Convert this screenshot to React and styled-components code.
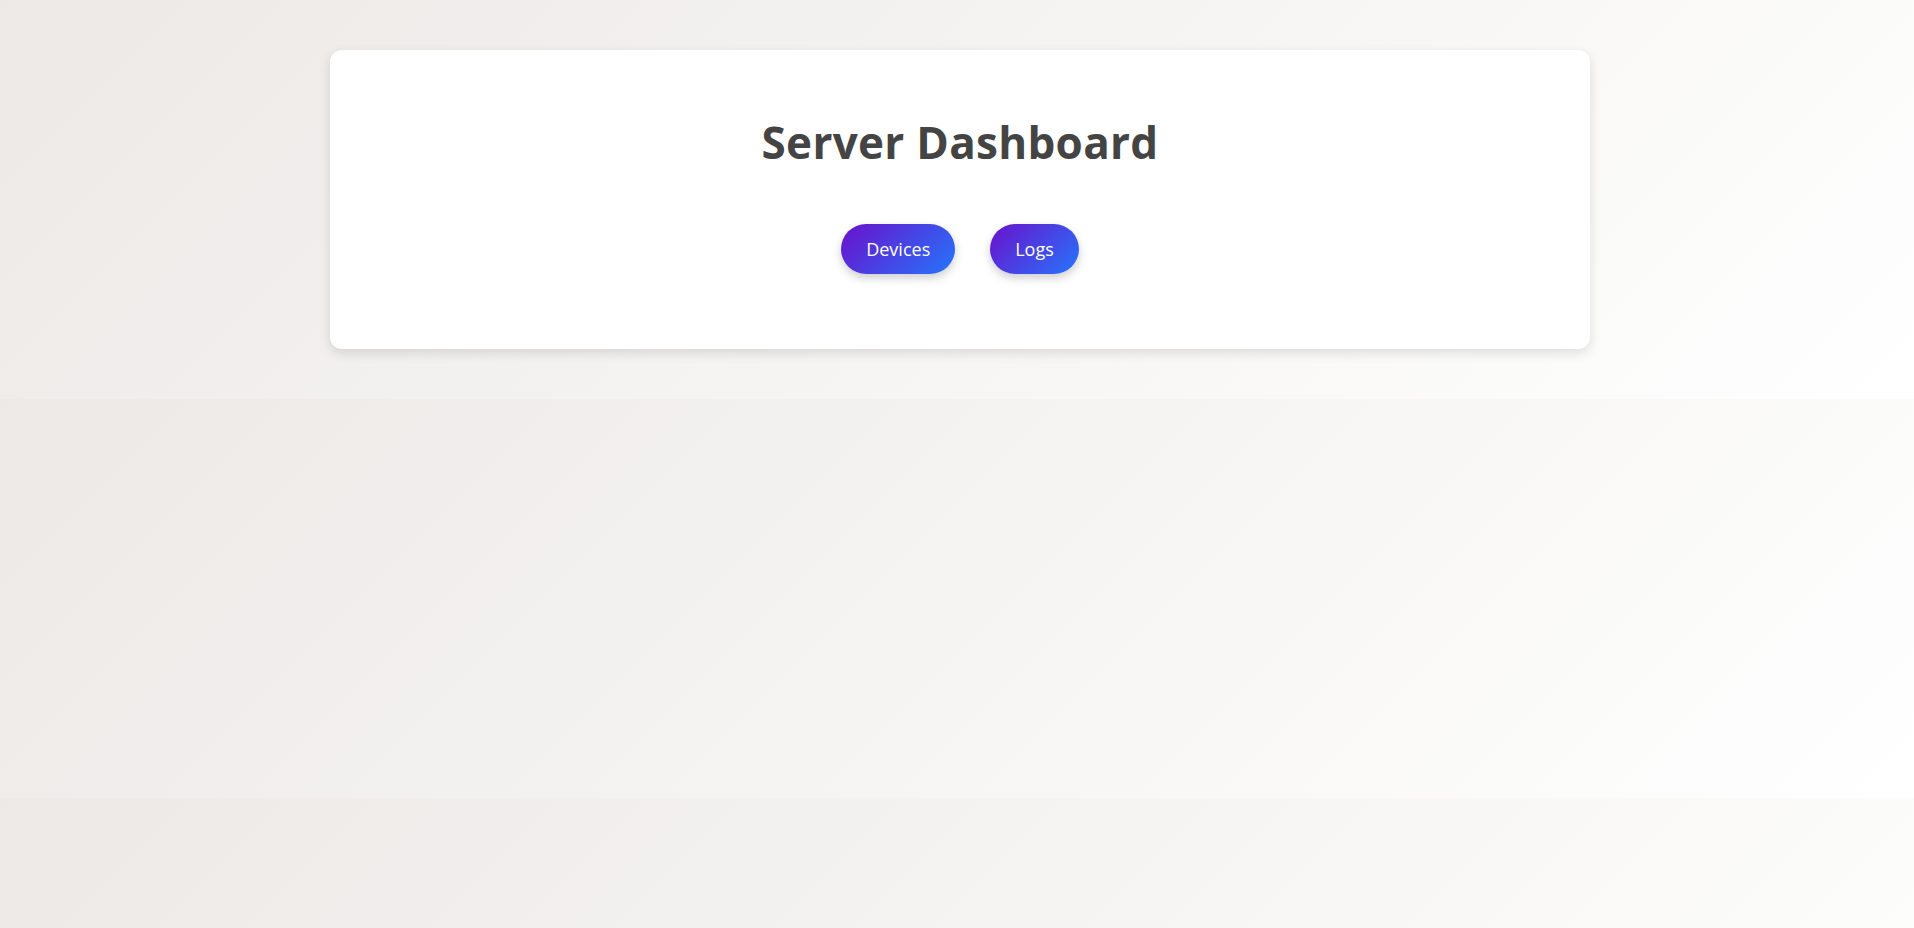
import React from "react";
import styled, { createGlobalStyle } from "styled-components";

const GlobalStyle = createGlobalStyle`
  body {
    margin: 0;
    padding: 50px 0;
    font-family: "Open Sans", "Noto Sans", sans-serif;
    background: linear-gradient(135deg, #ece9e6, #ffffff);
    color: #444;
  }
`;

const Card = styled.div`
  width: 1260px;
  height: 299px;
  box-sizing: border-box;
  margin: 0 0 0 calc(50% - 627px);
  background: #fff;
  border-radius: 12px;
  box-shadow: 0 4px 12px rgba(0, 0, 0, 0.12);
  display: flex;
  flex-direction: column;
  align-items: center;
  padding-top: 66px;
`;

const Title = styled.h1`
  margin: 0;
  font-size: 44px;
  font-weight: 700;
  line-height: 1.2;
  color: #444;
  letter-spacing: 0.3px;
`;

const ButtonRow = styled.div`
  display: flex;
  gap: 35px;
  margin-top: 55px;
`;

const NavButton = styled.button`
  height: 50px;
  padding: 0 25px;
  border: none;
  border-radius: 25px;
  background: linear-gradient(135deg, #6a11cb, #2575fc);
  color: #fff;
  font-family: "Open Sans", "Noto Sans", sans-serif;
  font-size: 18px;
  box-shadow: 0 4px 10px rgba(0, 0, 0, 0.2);
  cursor: pointer;
`;

export default function App() {
  return (
    <>
      <GlobalStyle />
      <Card>
        <Title>Server Dashboard</Title>
        <ButtonRow>
          <NavButton>Devices</NavButton>
          <NavButton>Logs</NavButton>
        </ButtonRow>
      </Card>
    </>
  );
}
